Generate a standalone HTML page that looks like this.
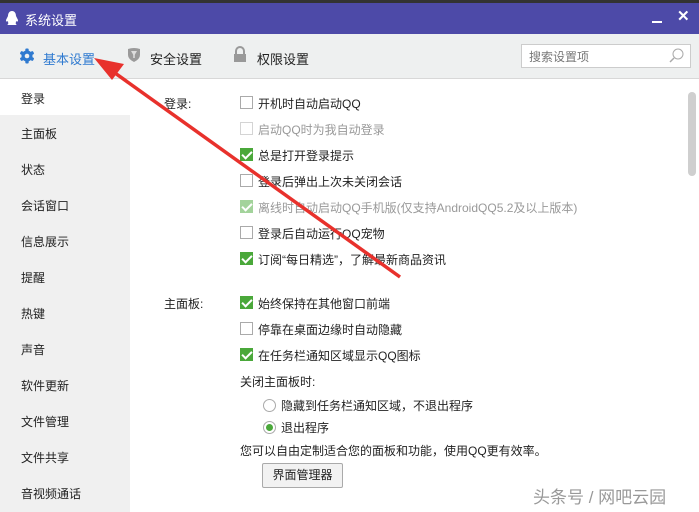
<!DOCTYPE html>
<html><head><meta charset="utf-8"><style>
*{margin:0;padding:0;box-sizing:border-box}
body{width:699px;height:512px;overflow:hidden;background:#fff;font-family:"Liberation Sans","Noto Sans CJK SC",sans-serif;font-size:12px;color:#222;position:relative}
.a{position:absolute;white-space:nowrap}
.cb{position:absolute;width:13px;height:13px;border:1px solid #aaa;background:#fff}
.ck{background:#4aa83a;border-color:#4aa83a}
.ck::after{content:"";position:absolute;left:3px;top:0px;width:4px;height:8px;border:solid #fff;border-width:0 2px 2px 0;transform:rotate(45deg)}
.dis{opacity:.5}
.side div{position:absolute;left:21px;font-size:12px}
</style></head><body>
<div class="a" style="left:0;top:0;width:699px;height:3px;background:#333"></div>
<div class="a" style="left:0;top:3px;width:699px;height:31px;background:#4d4aa8"></div>
<svg class="a" style="left:5px;top:10px" width="14" height="16" viewBox="0 0 14 16"><path d="M7 1C4 1 3 4 3 6L1 10C1 12 2 12 3 11C3 13 4 14 2 15H12C10 14 11 13 11 11C12 12 13 12 13 10L11 6C11 4 10 1 7 1Z" fill="#fff"/></svg>
<div class="a" style="left:25px;top:10px;color:#fff;font-size:13px">系统设置</div>
<div class="a" style="left:652px;top:21px;width:10px;height:2px;background:#fff"></div>
<div class="a" style="left:677px;top:7px;color:#fff;font-size:15px;font-weight:bold">✕</div>
<div class="a" style="left:0;top:34px;width:699px;height:45px;background:#eef0f0;border-bottom:1px solid #d8d8d8"></div>
<svg class="a" style="left:19px;top:48px" width="16" height="16" viewBox="0 0 16 16"><g fill="#2f7ad0"><circle cx="8" cy="8" r="5.5"/><rect x="6.3" y="0.5" width="3.4" height="15" rx="1"/><rect x="6.3" y="0.5" width="3.4" height="15" rx="1" transform="rotate(60 8 8)"/><rect x="6.3" y="0.5" width="3.4" height="15" rx="1" transform="rotate(120 8 8)"/></g><circle cx="8" cy="8" r="2.3" fill="#eef0f0"/></svg>
<div class="a" style="left:43px;top:49px;color:#2f7ad0;font-size:13px">基本设置</div>
<svg class="a" style="left:127px;top:47px" width="14" height="16"><path d="M1 2Q7 0 13 2V8Q13 12 7 15Q1 12 1 8Z" fill="#9a9a9a"/><path d="M4 4H10L7 9Z" fill="#ddd"/><path d="M6.2 6H7.8V11H6.2Z" fill="#ddd"/></svg>
<div class="a" style="left:150px;top:49px;font-size:13px">安全设置</div>
<svg class="a" style="left:233px;top:46px" width="14" height="17"><path d="M3 8V5A4 4 0 0 1 11 5V8" stroke="#999" stroke-width="2" fill="none"/><rect x="1" y="8" width="12" height="8" fill="#999"/></svg>
<div class="a" style="left:257px;top:49px;font-size:13px">权限设置</div>
<div class="a" style="left:521px;top:44px;width:170px;height:24px;background:#fff;border:1px solid #ccc"></div>
<div class="a" style="left:529px;top:48px;color:#777;font-size:12px">搜索设置项</div>
<svg class="a" style="left:668px;top:48px" width="16" height="16"><circle cx="10" cy="6" r="5" stroke="#aaa" fill="none"/><path d="M6 10L2 14" stroke="#aaa" stroke-width="1.5"/></svg>
<div class="a" style="left:0;top:115px;width:130px;height:397px;background:#f0f0f0"></div>
<div class="side">
<div style="top:90px">登录</div><div style="top:125px">主面板</div><div style="top:161px">状态</div><div style="top:197px">会话窗口</div><div style="top:233px">信息展示</div><div style="top:269px">提醒</div><div style="top:305px">热键</div><div style="top:341px">声音</div><div style="top:377px">软件更新</div><div style="top:413px">文件管理</div><div style="top:449px">文件共享</div><div style="top:485px">音视频通话</div>
</div>
<div class="a" style="left:688px;top:92px;width:8px;height:84px;background:#cfcfcf;border-radius:4px"></div>
<div class="a" style="left:164px;top:95px">登录:</div>
<div class="cb" style="left:240px;top:96px"></div><div class="a" style="left:258px;top:95px">开机时自动启动QQ</div>
<div class="cb dis" style="left:240px;top:122px"></div><div class="a" style="left:258px;top:121px;color:#999">启动QQ时为我自动登录</div>
<div class="cb ck" style="left:240px;top:148px"></div><div class="a" style="left:258px;top:147px">总是打开登录提示</div>
<div class="cb" style="left:240px;top:174px"></div><div class="a" style="left:258px;top:173px">登录后弹出上次未关闭会话</div>
<div class="cb ck dis" style="left:240px;top:200px"></div><div class="a" style="left:258px;top:199px;color:#999">离线时自动启动QQ手机版(仅支持AndroidQQ5.2及以上版本)</div>
<div class="cb" style="left:240px;top:226px"></div><div class="a" style="left:258px;top:225px">登录后自动运行QQ宠物</div>
<div class="cb ck" style="left:240px;top:252px"></div><div class="a" style="left:258px;top:251px">订阅“每日精选”，了解最新商品资讯</div>
<div class="a" style="left:164px;top:295px">主面板:</div>
<div class="cb ck" style="left:240px;top:296px"></div><div class="a" style="left:258px;top:295px">始终保持在其他窗口前端</div>
<div class="cb" style="left:240px;top:322px"></div><div class="a" style="left:258px;top:321px">停靠在桌面边缘时自动隐藏</div>
<div class="cb ck" style="left:240px;top:348px"></div><div class="a" style="left:258px;top:347px">在任务栏通知区域显示QQ图标</div>
<div class="a" style="left:240px;top:373px">关闭主面板时:</div>
<div class="a" style="left:263px;top:399px;width:13px;height:13px;border:1px solid #aaa;border-radius:50%"></div>
<div class="a" style="left:281px;top:397px">隐藏到任务栏通知区域，不退出程序</div>
<div class="a" style="left:263px;top:421px;width:13px;height:13px;border:1px solid #aaa;border-radius:50%"></div>
<div class="a" style="left:266px;top:424px;width:7px;height:7px;background:#4aa83a;border-radius:50%"></div>
<div class="a" style="left:281px;top:419px">退出程序</div>
<div class="a" style="left:240px;top:442px">您可以自由定制适合您的面板和功能，使用QQ更有效率。</div>
<div class="a" style="left:262px;top:463px;width:81px;height:25px;border:1px solid #aaa;border-radius:2px;background:#f2f2f2;text-align:center;line-height:23px">界面管理器</div>
<div class="a" style="left:533px;top:483px;color:#999;font-size:17px">头条号 / 网吧云园</div>
<svg class="a" style="left:0;top:0" width="699" height="512"><path d="M400 277L108 68" stroke="#e8312c" stroke-width="3.5"/><path d="M94 58L124 64L112 80Z" fill="#e8312c"/></svg>
</body></html>
